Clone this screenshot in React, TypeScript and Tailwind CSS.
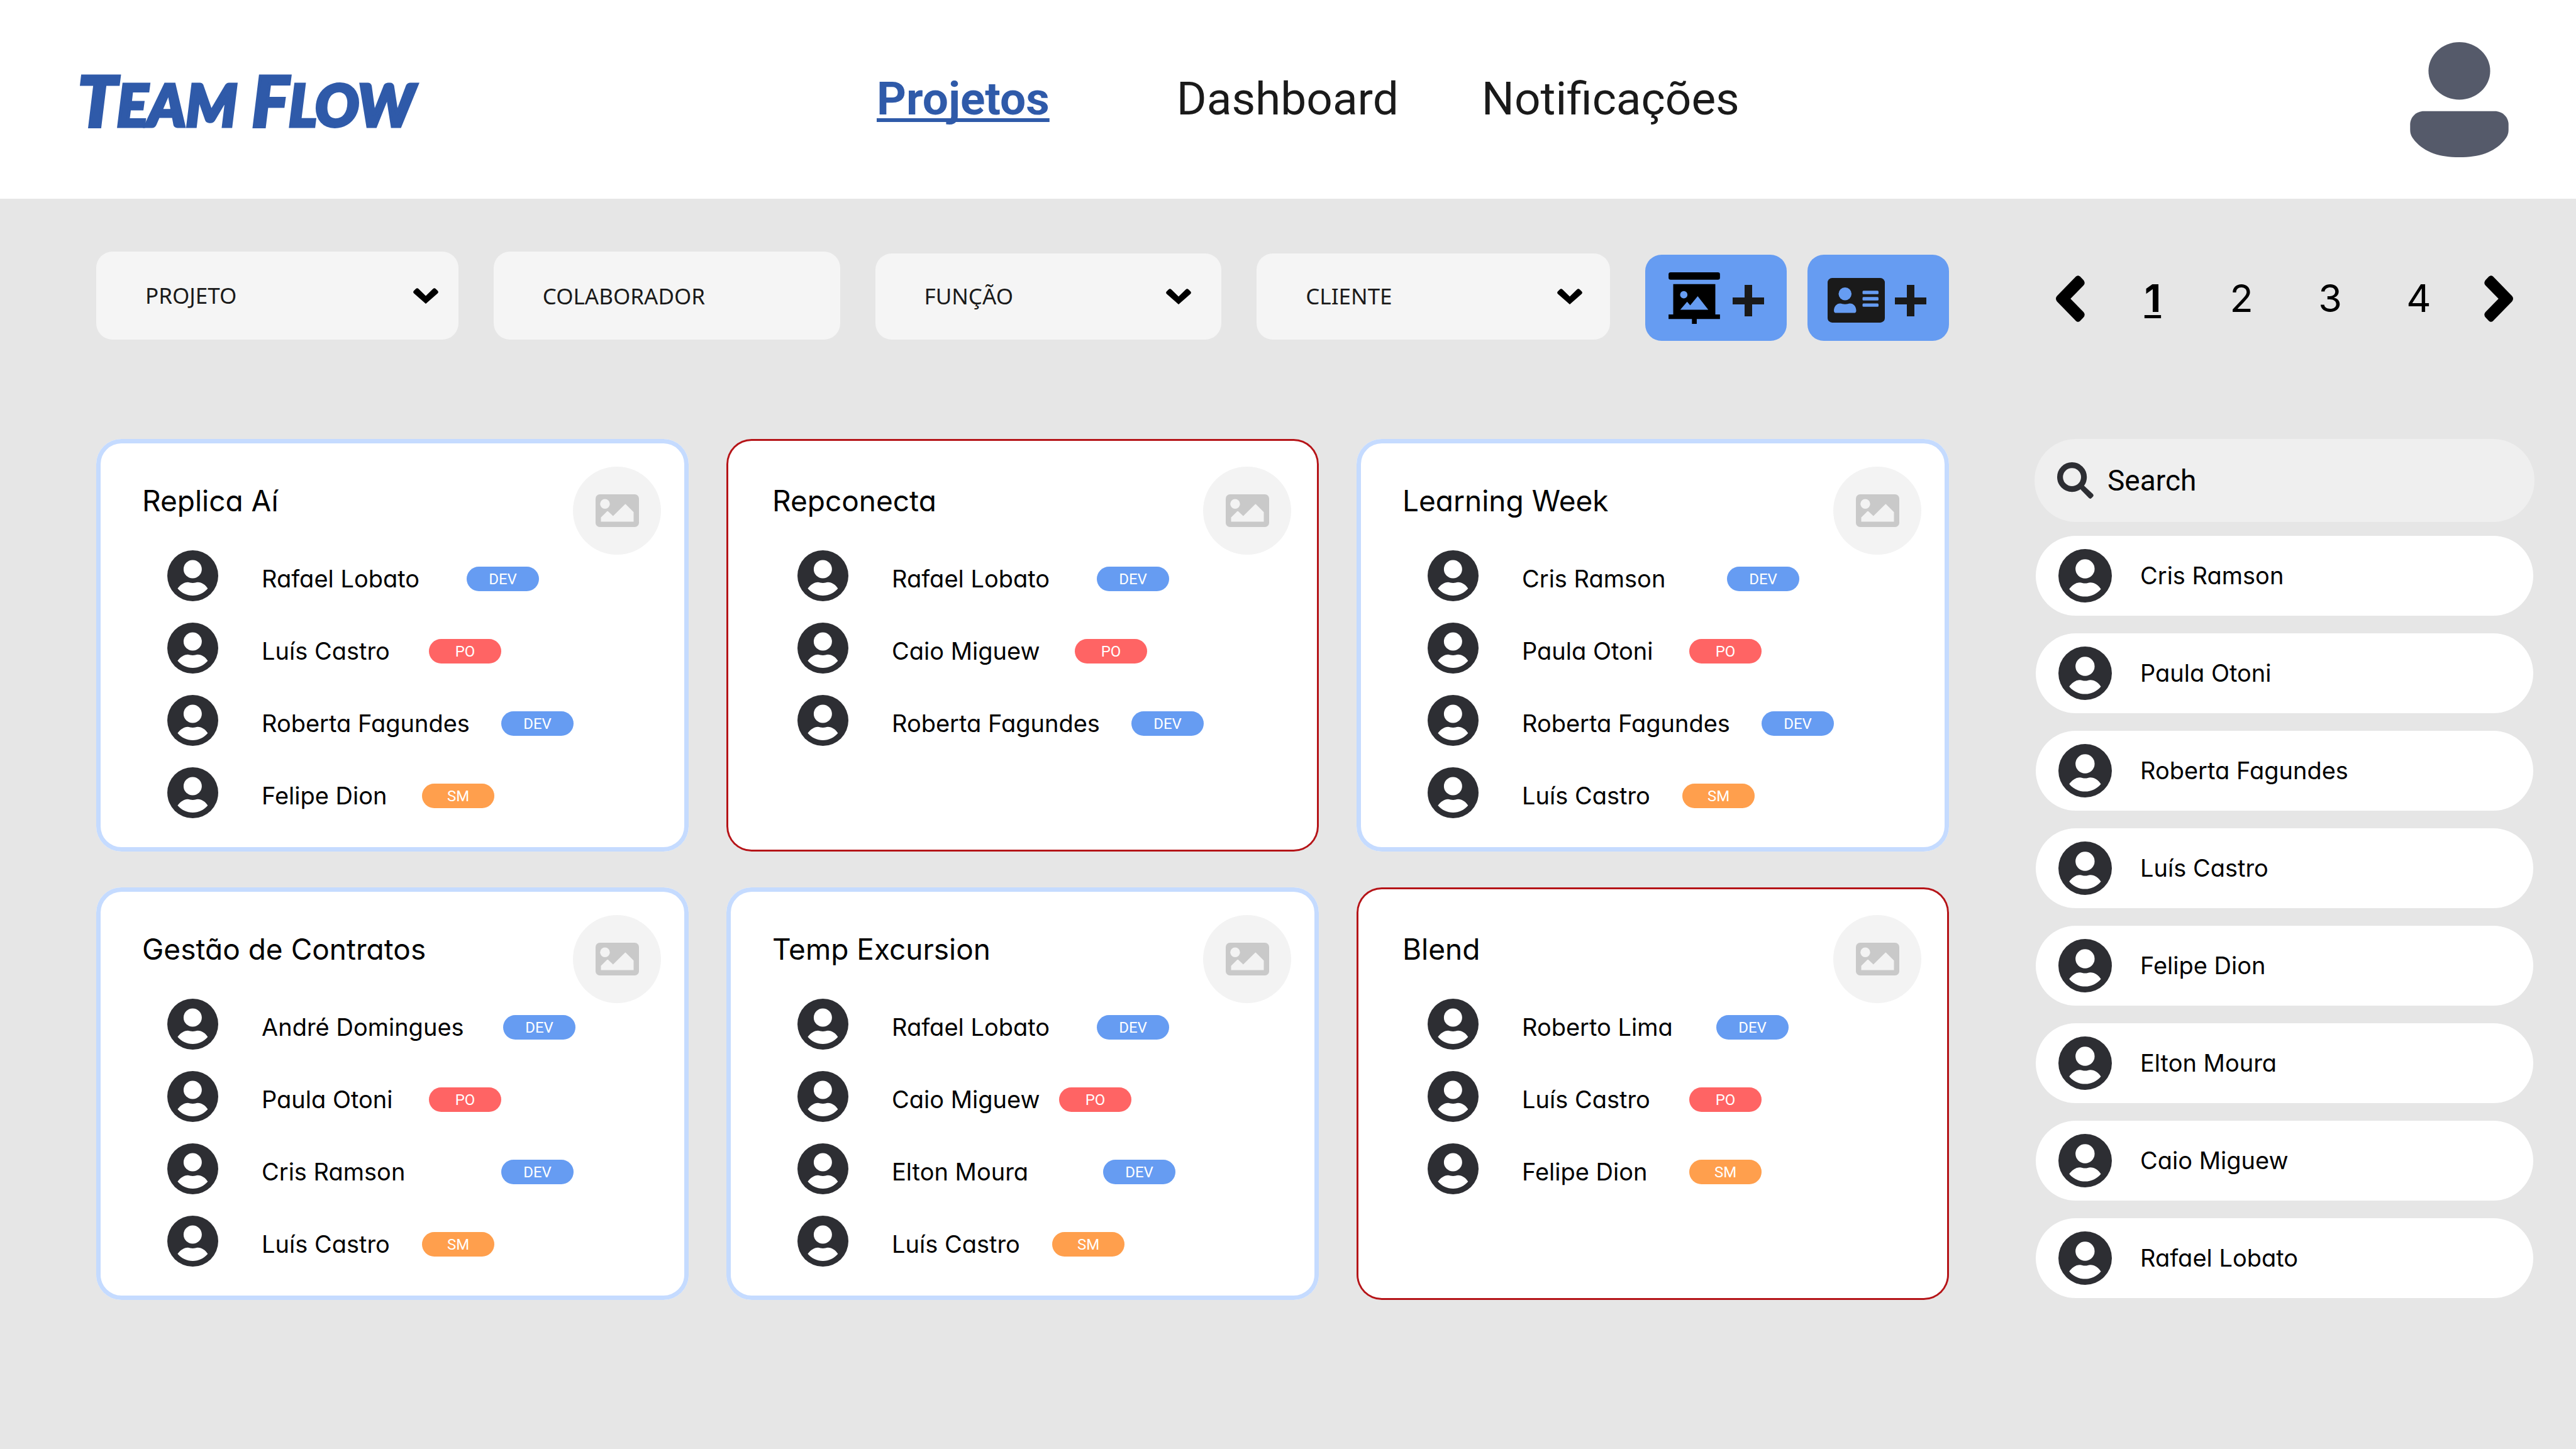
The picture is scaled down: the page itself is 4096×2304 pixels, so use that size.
import React from "react";

type Role = "DEV" | "PO" | "SM";

type Member = { name: string; role: Role; nameWidth: string };

type Project = { title: string; alert?: boolean; members: Member[] };

const ROLE_COLORS: Record<Role, string> = {
  DEV: "bg-[#669cf2]",
  PO: "bg-[#ff6464]",
  SM: "bg-[#ff9f4d]",
};

const PROJECTS: Project[] = [
  {
    title: "Replica Aí",
    members: [
      { name: "Rafael Lobato", role: "DEV", nameWidth: "w-[326px]" },
      { name: "Luís Castro", role: "PO", nameWidth: "w-[266px]" },
      { name: "Roberta Fagundes", role: "DEV", nameWidth: "w-[381px]" },
      { name: "Felipe Dion", role: "SM", nameWidth: "w-[255px]" },
    ],
  },
  {
    title: "Repconecta",
    alert: true,
    members: [
      { name: "Rafael Lobato", role: "DEV", nameWidth: "w-[326px]" },
      { name: "Caio Miguew", role: "PO", nameWidth: "w-[291px]" },
      { name: "Roberta Fagundes", role: "DEV", nameWidth: "w-[381px]" },
    ],
  },
  {
    title: "Learning Week",
    members: [
      { name: "Cris Ramson", role: "DEV", nameWidth: "w-[326px]" },
      { name: "Paula Otoni", role: "PO", nameWidth: "w-[266px]" },
      { name: "Roberta Fagundes", role: "DEV", nameWidth: "w-[381px]" },
      { name: "Luís Castro", role: "SM", nameWidth: "w-[255px]" },
    ],
  },
  {
    title: "Gestão de Contratos",
    members: [
      { name: "André Domingues", role: "DEV", nameWidth: "w-[384px]" },
      { name: "Paula Otoni", role: "PO", nameWidth: "w-[266px]" },
      { name: "Cris Ramson", role: "DEV", nameWidth: "w-[381px]" },
      { name: "Luís Castro", role: "SM", nameWidth: "w-[255px]" },
    ],
  },
  {
    title: "Temp Excursion",
    members: [
      { name: "Rafael Lobato", role: "DEV", nameWidth: "w-[326px]" },
      { name: "Caio Miguew", role: "PO", nameWidth: "w-[266px]" },
      { name: "Elton Moura", role: "DEV", nameWidth: "w-[336px]" },
      { name: "Luís Castro", role: "SM", nameWidth: "w-[255px]" },
    ],
  },
  {
    title: "Blend",
    alert: true,
    members: [
      { name: "Roberto Lima", role: "DEV", nameWidth: "w-[309px]" },
      { name: "Luís Castro", role: "PO", nameWidth: "w-[266px]" },
      { name: "Felipe Dion", role: "SM", nameWidth: "w-[266px]" },
    ],
  },
];

const PEOPLE = [
  "Cris Ramson",
  "Paula Otoni",
  "Roberta Fagundes",
  "Luís Castro",
  "Felipe Dion",
  "Elton Moura",
  "Caio Miguew",
  "Rafael Lobato",
];

function UserCircle({ className }: { className: string }) {
  return (
    <svg viewBox="0 0 316 316" className={className} aria-hidden="true">
      <circle cx="158" cy="158" r="158" fill="#2d2e33" />
      <circle cx="157.5" cy="117" r="56.5" fill="#fff" />
      <path
        d="M64 237C80 215 103 198 127 198c10 0 18 5 31 5s19-5 31-5c26 0 48 17 62 39-24 28-56 44-93 44s-70-16-94-44Z"
        fill="#fff"
      />
    </svg>
  );
}

function ProfileIcon() {
  return (
    <svg viewBox="0 0 612 716" className="h-[183px] w-[157px]" fill="#555a6a" aria-hidden="true">
      <ellipse cx="306" cy="179" rx="192" ry="179" />
      <path d="M86 429H526C574 429 612 466 612 512V544C612 574 602 592 583 614C520 686 430 716 306 716S92 686 29 614C10 592 0 574 0 544V512C0 466 38 429 86 429Z" />
    </svg>
  );
}

function ChevronDown({ className }: { className: string }) {
  return (
    <svg viewBox="0 0 40 25" className={"pointer-events-none absolute h-[25px] w-10 " + className} aria-hidden="true">
      <path d="M20 12.5 8.5 1.2Q6.2-.8 4.2 1.2L1.1 4.3Q-.9 6.6 1.2 8.6L20 25 38.8 8.6Q40.9 6.6 38.9 4.3L35.8 1.2Q33.8-.8 31.5 1.2Z" />
    </svg>
  );
}

function PageChevron({ flipped }: { flipped?: boolean }) {
  return (
    <svg viewBox="0 0 46 74" className="h-[74px] w-[46px]" aria-hidden="true">
      <path
        transform={flipped ? "matrix(-1 0 0 1 46 0)" : undefined}
        d="M32 1.6Q35.3-1.4 38.6 1.8L43.6 7Q47.8 11.6 43.8 16L23.2 37 43.8 58Q47.8 62.4 43.6 67L38.6 72.2Q35.3 75.4 32 72.4L1.8 41.4Q-1.8 37 1.8 32.6Z"
      />
    </svg>
  );
}

function SearchIcon() {
  return (
    <svg viewBox="0 0 58 58" className="h-[58px] w-[58px] shrink-0" aria-hidden="true">
      <circle cx="23.6" cy="23.6" r="19" fill="none" stroke="#2d2e33" strokeWidth="9.2" />
      <path
        d="M35 39 39 35 43 37.5 56.6 50.2Q59 52.8 56.6 55L54.6 57Q52.6 59 50.4 56.8L37.5 43.5Z"
        fill="#2d2e33"
      />
    </svg>
  );
}

function PictureIcon() {
  return (
    <svg viewBox="0 0 268 202" className="h-[52px] w-[69px]" aria-hidden="true">
      <rect width="268" height="202" rx="26" fill="#c9c9c9" />
      <circle cx="58" cy="59" r="30" fill="#f3f3f3" />
      <path
        d="M33 143 70 106Q74 101 78 106L108 134 180 63Q184 58 188 63L235 110V169H33Z"
        fill="#f3f3f3"
      />
    </svg>
  );
}

function BoardIcon() {
  return (
    <svg viewBox="0 0 321 322" className="h-[82px] w-[82px]" aria-hidden="true">
      <rect width="321" height="46" rx="13" />
      <path d="M29 74H292V263H321V292H176V322H146V292H0V263H29Z" />
      <circle cx="95" cy="140" r="23" fill="#669cf2" />
      <path d="M73 234 116 184 135 206 182 149 248 234Z" fill="#669cf2" />
    </svg>
  );
}

function IdCardIcon() {
  return (
    <svg viewBox="0 0 354 276" className="mt-2 h-[71px] w-[91px]" aria-hidden="true">
      <rect width="354" height="276" rx="28" fill="#1a1a1a" />
      <g fill="#669cf2">
        <circle cx="108" cy="98" r="40" />
        <path d="M39 202C39 176 56 157 78 157c10 0 16 5 30 5s20-5 30-5c23 0 39 19 39 45q0 14-14 14H53q-14 0-14-14Z" />
        <rect x="216" y="79" width="99" height="21" rx="6" />
        <rect x="216" y="118" width="99" height="21" rx="6" />
        <rect x="216" y="157" width="99" height="21" rx="6" />
      </g>
    </svg>
  );
}

function PlusIcon() {
  return (
    <svg viewBox="0 0 50 50" className="mt-2 h-[50px] w-[50px]" fill="#1a1a1a" aria-hidden="true">
      <path d="M19 0H31V20H50V31H31V50H19V31H0V20H19Z" />
    </svg>
  );
}

function FilterSelect({
  label,
  className,
  chevron,
}: {
  label: string;
  className: string;
  chevron: string;
}) {
  return (
    <div className={"relative flex min-w-0 items-center " + className}>
      <select
        aria-label={label}
        className="h-full w-full appearance-none rounded-[26px] bg-[#f5f5f5] pl-[78px] font-['Noto_Sans',sans-serif] text-[35px] text-[#1a1a1a]"
      >
        <option>{label}</option>
      </select>
      <ChevronDown className={chevron} />
    </div>
  );
}

function ProjectCard({ project }: { project: Project }) {
  return (
    <article
      className={
        "rounded-[40px] bg-white pt-11 pr-11 pb-[31px] ring-inset " +
        (project.alert ? "ring-3 ring-[#b51418]" : "ring-[7px] ring-[#c5dbff]")
      }
    >
      <header className="-mb-[19px] flex items-start justify-between pl-[73px]">
        <h2 className="mt-6 text-[46px] leading-[60px]">{project.title}</h2>
        <div className="flex size-[140px] items-center justify-center rounded-full bg-[#f3f3f3]">
          <PictureIcon />
        </div>
      </header>
      <ul className="pl-[113px]">
        {project.members.map((m) => (
          <li key={m.name} className="flex h-[115px] items-center">
            <UserCircle className="mr-[69px] mb-[10px] size-[81px] shrink-0" />
            <span className={"shrink-0 text-[38px] whitespace-nowrap " + m.nameWidth}>{m.name}</span>
            <span
              className={
                "flex h-[39px] w-[115px] items-center justify-center rounded-full font-['Roboto',sans-serif] text-[24px] text-white " +
                ROLE_COLORS[m.role]
              }
            >
              {m.role}
            </span>
          </li>
        ))}
      </ul>
    </article>
  );
}

export default function App() {
  return (
    <div className="flex min-h-screen flex-col bg-[#e6e6e6] font-['Inter',sans-serif] text-black [font-feature-settings:'cv11']">
      <header className="flex h-[316px] items-center bg-white pr-[107px] pl-[124px]">
        <a
          href="#"
          className="w-[1270px] shrink-0 font-['Lato',sans-serif] text-[110px] font-black whitespace-nowrap text-[#2f5aa9] italic [-webkit-text-stroke:5px_#2f5aa9]"
        >
          T<span className="text-[92px]">EAM</span> F<span className="text-[92px]">LOW</span>
        </a>
        <nav className="flex font-['Roboto',sans-serif] text-[73px] text-[#1a1a1a]">
          <a
            href="#"
            aria-current="page"
            className="font-bold text-[#2f5aa9] underline decoration-[6px] underline-offset-[6px] [text-decoration-skip-ink:none]"
          >
            Projetos
          </a>
          <a href="#" className="ml-[202px]">
            Dashboard
          </a>
          <a href="#" className="ml-[132px]">
            Notificações
          </a>
        </nav>
        <button type="button" aria-label="Perfil" className="ml-auto">
          <ProfileIcon />
        </button>
      </header>

      <main className="flex grow gap-[136px] pt-[84px] pr-[66px] pb-10 pl-[153px]">
        <section className="flex min-w-0 grow flex-col gap-[158px]">
          <form className="flex items-end">
            <FilterSelect label="PROJETO" className="mr-14 h-[140px] flex-[576]" chevron="right-8" />
            <div className="mr-14 h-[140px] min-w-0 flex-[551]">
              <input
                type="text"
                aria-label="Colaborador"
                placeholder="COLABORADOR"
                className="h-full w-full rounded-[26px] bg-[#f5f5f5] pl-[78px] font-['Noto_Sans',sans-serif] text-[35px] placeholder:text-[#1a1a1a]"
              />
            </div>
            <FilterSelect label="FUNÇÃO" className="mr-14 h-[137px] flex-[551]" chevron="right-12" />
            <FilterSelect label="CLIENTE" className="mr-14 h-[137px] flex-[562]" chevron="right-11" />
            <div className="-mb-[2px] flex gap-[33px]">
              <button
                type="button"
                aria-label="Adicionar projeto"
                className="flex h-[137px] w-[225px] items-center justify-center gap-5 rounded-[26px] bg-[#669cf2]"
              >
                <BoardIcon />
                <PlusIcon />
              </button>
              <button
                type="button"
                aria-label="Adicionar colaborador"
                className="flex h-[137px] w-[225px] items-center justify-center gap-4 rounded-[26px] bg-[#669cf2] pr-1"
              >
                <IdCardIcon />
                <PlusIcon />
              </button>
            </div>
          </form>

          <div className="grid grid-cols-3 gap-x-[60px] gap-y-[57px]">
            {PROJECTS.map((p) => (
              <ProjectCard key={p.title} project={p} />
            ))}
          </div>
        </section>

        <aside className="w-[795px] shrink-0">
          <nav aria-label="Páginas" className="mb-[149px] flex h-[149px] items-center justify-between px-[34px] text-[61px]">
            <button type="button" aria-label="Anterior">
              <PageChevron />
            </button>
            <div className="flex gap-[103px] pl-1">
              <button
                type="button"
                aria-current="page"
                className="flex w-[38px] justify-center font-bold underline decoration-[5px] underline-offset-[5px]"
              >
                1
              </button>
              <button type="button" className="flex w-[38px] justify-center">
                2
              </button>
              <button type="button" className="flex w-[38px] justify-center">
                3
              </button>
              <button type="button" className="flex w-[38px] justify-center">
                4
              </button>
            </div>
            <button type="button" aria-label="Próxima">
              <PageChevron flipped />
            </button>
          </nav>

          <label className="flex h-[132px] items-center gap-[22px] rounded-full bg-[#efefef] px-9">
            <SearchIcon />
            <input
              type="search"
              aria-label="Search"
              placeholder="Search"
              className="min-w-0 grow bg-transparent font-['Roboto',sans-serif] text-[46px] placeholder:text-black"
            />
          </label>

          <ul className="mt-[22px] flex flex-col gap-7 px-[2px]">
            {PEOPLE.map((name) => (
              <li key={name} className="flex h-[127px] items-center gap-[45px] rounded-full bg-white px-9 text-[38px]">
                <UserCircle className="size-[85px]" />
                {name}
              </li>
            ))}
          </ul>
        </aside>
      </main>
    </div>
  );
}
